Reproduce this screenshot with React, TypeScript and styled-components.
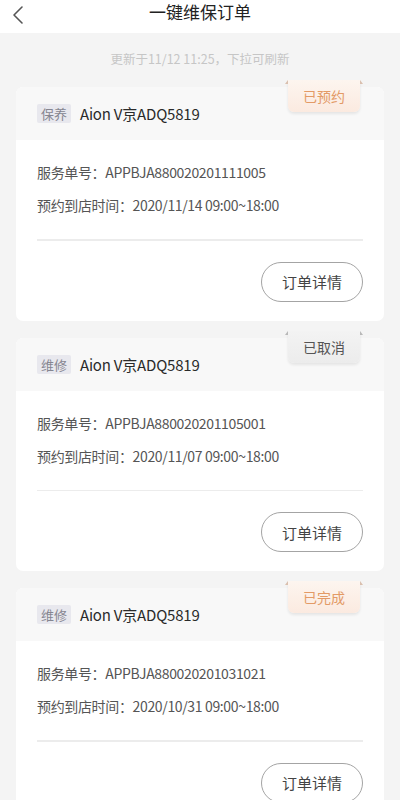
import React from 'react';
import styled, { createGlobalStyle } from 'styled-components';

const GlobalStyle = createGlobalStyle`
  body {
    margin: 0;
    background: #f4f4f4;
    font-family: "Noto Sans CJK SC", "Noto Sans", sans-serif;
  }
`;

type Status = 'booked' | 'cancelled' | 'done';

interface Order {
  kind: string;
  plate: string;
  no: string;
  date: string;
  status: Status;
}

const orders: Order[] = [
  { kind: '保养', plate: 'Aion V京ADQ5819', no: 'APPBJA880020201111005', date: '2020/11/14', status: 'booked' },
  { kind: '维修', plate: 'Aion V京ADQ5819', no: 'APPBJA880020201105001', date: '2020/11/07', status: 'cancelled' },
  { kind: '维修', plate: 'Aion V京ADQ5819', no: 'APPBJA880020201031021', date: '2020/10/31', status: 'done' },
];

const statusText: Record<Status, string> = {
  booked: '已预约',
  cancelled: '已取消',
  done: '已完成',
};

const TopBar = styled.div`
  height: 33px;
  background: #fff;
  display: grid;
  grid-template-columns: 48px 1fr 48px;
  align-items: center;
`;

const BackButton = styled.button`
  border: none;
  background: none;
  padding: 0 0 0 12px;
  height: 33px;
  display: flex;
  align-items: center;
  cursor: pointer;
  position: relative;
  top: -2px;
`;

const Title = styled.h1`
  margin: 0;
  text-align: center;
  font-size: 17px;
  font-weight: 400;
  color: #222;
  line-height: 24px;
  position: relative;
  top: -5px;
`;

const Hint = styled.div`
  height: 54px;
  display: flex;
  align-items: center;
  justify-content: center;
  font-size: 12.5px;
  color: #c6c6c6;
  padding-bottom: 4px;
  box-sizing: border-box;
`;

const List = styled.div`
  display: flex;
  flex-direction: column;
  gap: 17px;
  padding: 0 16px 20px;
`;

const Card = styled.div`
  position: relative;
  background: #fff;
  border-radius: 7px;
`;

const CardHead = styled.div`
  height: 53px;
  background: #f8f8f8;
  border-radius: 7px 7px 0 0;
  display: flex;
  align-items: center;
  padding: 0 21px;
`;

const KindTag = styled.span`
  background: #e8e8ee;
  color: #858590;
  font-size: 13px;
  line-height: 19px;
  padding: 0 4px;
  border-radius: 2px;
`;

const Plate = styled.span`
  margin-left: 9px;
  font-size: 15px;
  color: #2a2a2a;
  letter-spacing: -0.2px;
`;

const Badge = styled.div<{ $status: Status }>`
  position: absolute;
  top: -7px;
  right: 24px;
  width: 72px;
  height: 32px;
  display: flex;
  align-items: center;
  justify-content: center;
  font-size: 14px;
  border-radius: 0 0 6px 6px;
  color: ${({ $status }) => ($status === 'cancelled' ? '#555' : '#e39a66')};
  background: ${({ $status }) =>
    $status === 'cancelled'
      ? 'linear-gradient(#f3f3f3, #ececec)'
      : 'linear-gradient(#fdf5ef, #fbeae0)'};
  box-shadow: 0 2px 3px rgba(0, 0, 0, 0.08);

  &::before,
  &::after {
    content: '';
    position: absolute;
    top: 0;
    width: 0;
    height: 0;
    border-bottom: 4px solid ${({ $status }) => ($status === 'cancelled' ? '#b8b8b8' : '#d9bfae')};
  }
  &::before {
    left: -3px;
    border-left: 3px solid transparent;
  }
  &::after {
    right: -3px;
    border-right: 3px solid transparent;
  }
`;

const CardBody = styled.div`
  padding: 16px 21px 19px;
  display: flex;
  flex-direction: column;
`;

const InfoLine = styled.div`
  font-size: 14px;
  line-height: 33px;
  color: #555;
  letter-spacing: -0.35px;
`;

const Divider = styled.div`
  height: 1.5px;
  background: #ececec;
  margin: 17px 0 21px;
`;

const DetailButton = styled.button`
  align-self: flex-end;
  width: 102px;
  height: 40px;
  border-radius: 20px;
  border: 1px solid #a4a4a4;
  background: #fff;
  color: #444;
  font-family: inherit;
  font-size: 15px;
  cursor: pointer;
`;

const ChevronLeft = () => (
  <svg width="12" height="20" viewBox="0 0 12 20" fill="none">
    <path d="M10 2 L2 10 L10 18" stroke="#555" strokeWidth="1.6" strokeLinecap="round" strokeLinejoin="round" />
  </svg>
);

const OrderCard = ({ order }: { order: Order }) => (
  <Card>
    <CardHead>
      <KindTag>{order.kind}</KindTag>
      <Plate>{order.plate}</Plate>
    </CardHead>
    <Badge $status={order.status}>{statusText[order.status]}</Badge>
    <CardBody>
      <InfoLine>服务单号：{order.no}</InfoLine>
      <InfoLine>预约到店时间：{order.date} 09:00~18:00</InfoLine>
      <Divider />
      <DetailButton>订单详情</DetailButton>
    </CardBody>
  </Card>
);

export default function App() {
  return (
    <>
      <GlobalStyle />
      <TopBar>
        <BackButton aria-label="返回">
          <ChevronLeft />
        </BackButton>
        <Title>一键维保订单</Title>
        <span />
      </TopBar>
      <Hint>更新于11/12 11:25，下拉可刷新</Hint>
      <List>
        {orders.map((o) => (
          <OrderCard key={o.no} order={o} />
        ))}
      </List>
    </>
  );
}
